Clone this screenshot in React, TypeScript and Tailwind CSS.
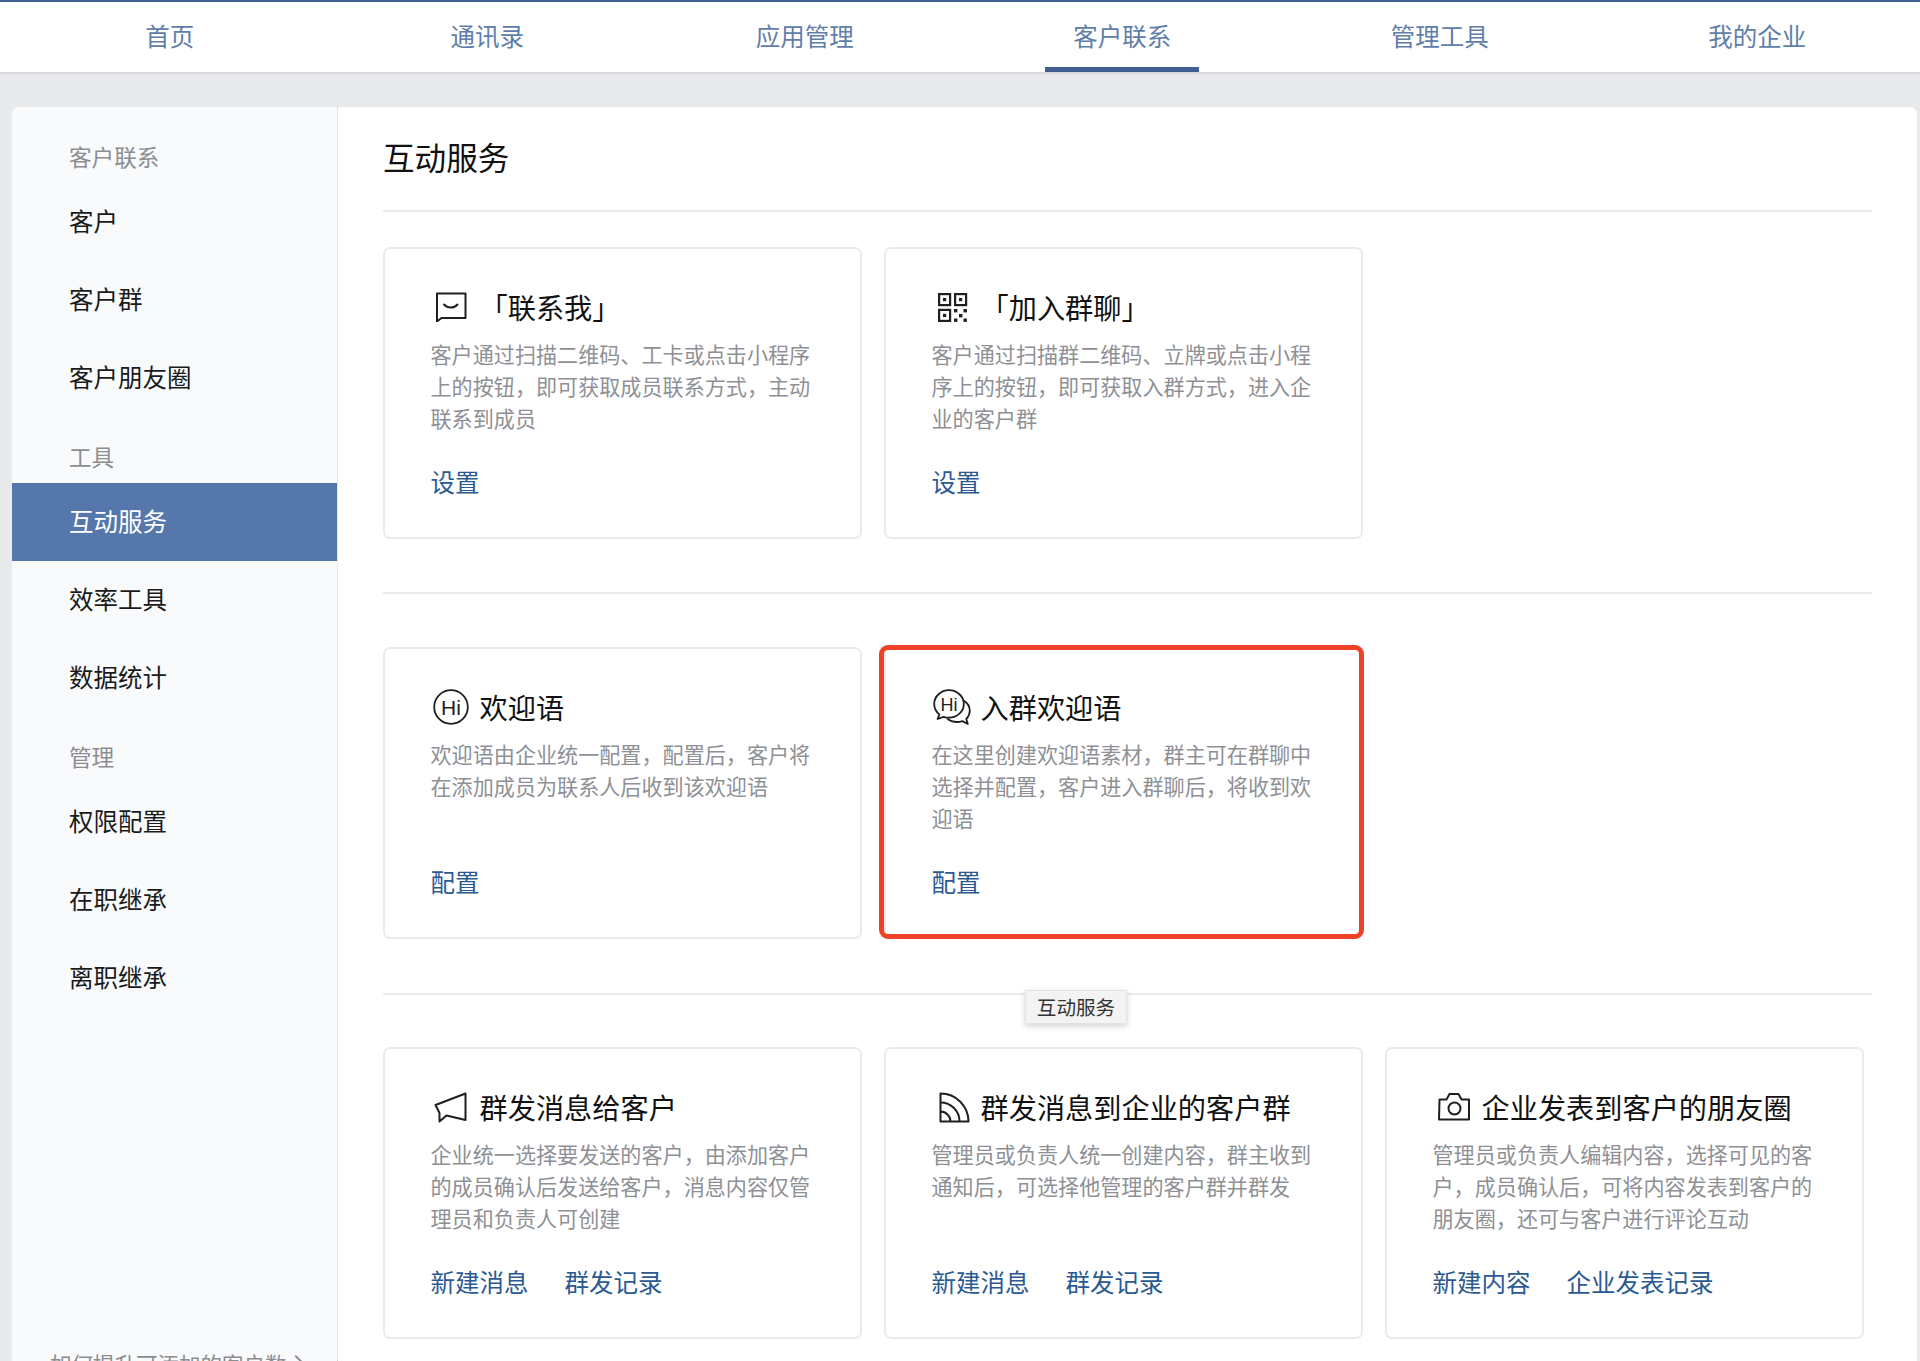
import React from "react";

const stroke = "#1f1f1f";

function ChatIcon() {
  return (
    <svg width="32" height="30" viewBox="0 0 32 30" fill="none" stroke={stroke} strokeWidth="2" className="ml-[4px]">
      <path d="M2 1.500h28.500v24.500H6.500L2 29.500z" strokeLinejoin="round" />
      <path d="M9 12.500c3.800 4 10 4 13.500 0" strokeLinecap="round" />
    </svg>
  );
}

function QrIcon() {
  return (
    <svg width="30" height="29" viewBox="0 0 30 29" className="ml-[6px]">
      <g fill="none" stroke={stroke} strokeWidth="2.2">
        <rect x="1.100" y="1.100" width="11" height="11" />
        <rect x="17.100" y="1.100" width="11" height="11" />
        <rect x="1.100" y="16.900" width="11" height="11" />
      </g>
      <g fill={stroke}>
        <rect x="5" y="5" width="3.200" height="3.200" />
        <rect x="21" y="5" width="3.200" height="3.200" />
        <rect x="5" y="20.800" width="3.200" height="3.200" />
        <rect x="16" y="16" width="3.400" height="3.400" />
        <rect x="25.500" y="16" width="3.400" height="3.400" />
        <rect x="21" y="21" width="3.400" height="3.400" />
        <rect x="16" y="25.500" width="3.400" height="3.400" />
        <rect x="25.500" y="25.500" width="3.400" height="3.400" />
      </g>
    </svg>
  );
}

function HiIcon() {
  return (
    <svg width="36" height="36" viewBox="0 0 36 36" className="ml-[2px]">
      <circle cx="18" cy="18" r="16.800" fill="none" stroke={stroke} strokeWidth="1.800" />
      <text x="18" y="25.500" textAnchor="middle" fontSize="21" fontFamily="'Liberation Sans', sans-serif" fill={stroke}>
        Hi
      </text>
    </svg>
  );
}

function HiGroupIcon() {
  return (
    <svg width="38" height="37" viewBox="0 0 38 37" className="ml-[1px]">
      <path
        d="M16 1.200C7.800 1.200 1.200 7.400 1.200 15c0 4.200 2 7.900 5.200 10.400L4.600 30l6-2.200c1.700.6 3.500.9 5.400.9 8.200 0 14.800-6.100 14.800-13.700S24.200 1.200 16 1.200z"
        fill="none"
        stroke={stroke}
        strokeWidth="1.800"
        strokeLinejoin="round"
      />
      <path
        d="M30.500 11.500c3.900 2.300 6.300 6.100 6.300 10.300 0 3.100-1.300 5.900-3.500 8.100l1.500 5-5.500-2.800c-1.700.6-3.500.9-5.300.9-3.800 0-7.200-1.300-9.700-3.500"
        fill="none"
        stroke={stroke}
        strokeWidth="1.800"
        strokeLinejoin="round"
      />
      <text x="16" y="21.500" textAnchor="middle" fontSize="18" fontFamily="'Liberation Sans', sans-serif" fill={stroke}>
        Hi
      </text>
    </svg>
  );
}

function MegaphoneIcon() {
  return (
    <svg width="33" height="31" viewBox="0 0 33 31" fill="none" stroke={stroke} strokeWidth="2" strokeLinejoin="round" className="ml-[3px]">
      <path d="M31.500 1.500v26.500L12.500 23.500 5.500 29.500l0-8.500L1.500 13z" />
    </svg>
  );
}

function RssIcon() {
  return (
    <svg width="31" height="31" viewBox="0 0 31 31" fill="none" stroke={stroke} strokeWidth="2" className="ml-[7px]">
      <path d="M1.500 1.500c15.500 0 28 12.500 28 28H1.500z" strokeLinejoin="round" />
      <path d="M1.500 10.500c10.500 0 19 8.500 19 19" />
      <path d="M1.500 19.500c5.500 0 10 4.500 10 10" />
    </svg>
  );
}

function CameraIcon() {
  return (
    <svg width="33" height="30" viewBox="0 0 33 30" fill="none" stroke={stroke} strokeWidth="2" strokeLinejoin="round" className="ml-[5px]">
      <path d="M1.500 7.500h7l3-5.500h9l3 5.500h7.500v20h-30z" />
      <circle cx="16.500" cy="16.500" r="6" />
    </svg>
  );
}

type CardData = {
  icon: React.ReactNode;
  title: string;
  desc: string;
  links: string[];
  highlight?: boolean;
};

function Card({ icon, title, desc, links, highlight }: CardData) {
  return (
    <div className="relative box-border h-[292px] w-[479px] shrink-0 rounded-[7px] border-2 border-[#e9ebef] bg-white pl-[45.500px] pt-[38px]">
      <div className="flex h-[40px] items-center">
        <div className="flex w-[49px] shrink-0 items-center">{icon}</div>
        <div className="text-[28.200px] leading-[40px] text-[#111111]">{title}</div>
      </div>
      <p className="mt-[11px] h-[96px] w-[384px] text-[21.100px] leading-[32px] text-[#8e9095]">{desc}</p>
      <div className="mt-[32px] flex gap-[36px] text-[24.500px] leading-[32px] text-[#2b5a93]">
        {links.map((l) => (
          <span key={l}>{l}</span>
        ))}
      </div>
      {highlight ? (
        <div className="absolute -left-[7px] -top-[4px] -right-[3px] -bottom-[2px] rounded-[9px] border-[5px] border-[#ef4126]" />
      ) : null}
    </div>
  );
}

const rows: CardData[][] = [
  [
    {
      icon: <ChatIcon />,
      title: "「联系我」",
      desc: "客户通过扫描二维码、工卡或点击小程序上的按钮，即可获取成员联系方式，主动联系到成员",
      links: ["设置"],
    },
    {
      icon: <QrIcon />,
      title: "「加入群聊」",
      desc: "客户通过扫描群二维码、立牌或点击小程序上的按钮，即可获取入群方式，进入企业的客户群",
      links: ["设置"],
    },
  ],
  [
    {
      icon: <HiIcon />,
      title: "欢迎语",
      desc: "欢迎语由企业统一配置，配置后，客户将在添加成员为联系人后收到该欢迎语",
      links: ["配置"],
    },
    {
      icon: <HiGroupIcon />,
      title: "入群欢迎语",
      desc: "在这里创建欢迎语素材，群主可在群聊中选择并配置，客户进入群聊后，将收到欢迎语",
      links: ["配置"],
      highlight: true,
    },
  ],
  [
    {
      icon: <MegaphoneIcon />,
      title: "群发消息给客户",
      desc: "企业统一选择要发送的客户，由添加客户的成员确认后发送给客户，消息内容仅管理员和负责人可创建",
      links: ["新建消息", "群发记录"],
    },
    {
      icon: <RssIcon />,
      title: "群发消息到企业的客户群",
      desc: "管理员或负责人统一创建内容，群主收到通知后，可选择他管理的客户群并群发",
      links: ["新建消息", "群发记录"],
    },
    {
      icon: <CameraIcon />,
      title: "企业发表到客户的朋友圈",
      desc: "管理员或负责人编辑内容，选择可见的客户，成员确认后，可将内容发表到客户的朋友圈，还可与客户进行评论互动",
      links: ["新建内容", "企业发表记录"],
    },
  ],
];

const tabs = ["首页", "通讯录", "应用管理", "客户联系", "管理工具", "我的企业"];

const side: { heading: string; items: string[] }[] = [
  { heading: "客户联系", items: ["客户", "客户群", "客户朋友圈"] },
  { heading: "工具", items: ["互动服务", "效率工具", "数据统计"] },
  { heading: "管理", items: ["权限配置", "在职继承", "离职继承"] },
];

export default function App() {
  return (
    <div
      lang="zh-CN"
      className="relative h-[1361px] w-[1920px] overflow-hidden bg-[#e8e9eb] font-['Noto_Sans_CJK_SC','Liberation_Sans',sans-serif]"
    >
      <header className="flex h-[72px] border-t-2 border-[#3f5e92] bg-white pl-[11px] pr-[4px] shadow-[0_1px_3px_rgba(0,0,0,0.12)]">
        {tabs.map((t) => (
          <div key={t} className="relative flex h-[70px] flex-1 items-center justify-center pb-[1px] text-[24.500px] text-[#5f7ea9]">
            {t}
            {t === "客户联系" ? (
              <div className="absolute bottom-0 left-1/2 h-[5px] w-[154px] -translate-x-1/2 bg-[#3f5e92]" />
            ) : null}
          </div>
        ))}
      </header>

      <div className="ml-[12px] mr-[3px] mt-[35px] flex h-[1300px] overflow-hidden rounded-t-[7px] bg-white">
        <aside className="w-[326px] shrink-0 border-r border-dotted border-[#cfd2d8] bg-[#f9fafc] pt-[26px]">
          {side.map((s, i) => (
            <div key={s.heading}>
              <div
                className={
                  i === 0
                    ? "flex h-[50px] items-center pb-[3px] pl-[57px] text-[22.600px] text-[#8b8d91]"
                    : "mt-[16px] flex h-[50px] items-center pb-[3px] pl-[57px] text-[22.600px] text-[#8b8d91]"
                }
              >
                {s.heading}
              </div>
              {s.items.map((it) => (
                <div
                  key={it}
                  className={
                    it === "互动服务"
                      ? "flex h-[78px] items-center bg-[#5577ab] pb-[1px] pl-[57px] text-[24.500px] text-white"
                      : "flex h-[78px] items-center pb-[1px] pl-[57px] text-[24.500px] text-[#1a1a1a]"
                  }
                >
                  {it}
                </div>
              ))}
            </div>
          ))}
          <div className="mt-[332px] flex items-center gap-[4px] pl-[38px] text-[21.500px] leading-[30px] text-[#8b8d91]">
            <span>如何提升可添加的客户数</span>
            <span className="-mt-[4px] inline-block h-[10px] w-[10px] rotate-45 border-r-2 border-t-2 border-[#8b8d91]" />
          </div>
        </aside>

        <main className="flex-1 pl-[45px] pr-[45px]">
          <div className="flex h-[105px] items-center border-b-2 border-[#e6e8ec] pb-[4px] text-[31.600px] text-[#111111]">
            互动服务
          </div>
          {rows.map((row, i) => (
            <div
              key={i}
              className={
                i === 0
                  ? "flex gap-[22px] border-b-2 border-[#e9ebee] pb-[53px] pt-[35px]"
                  : i === 1
                    ? "flex gap-[22px] border-b-2 border-[#e9ebee] pb-[54px] pt-[53px]"
                    : "flex gap-[22px] pt-[52px]"
              }
            >
              {row.map((c) => (
                <Card key={c.title} {...c} />
              ))}
            </div>
          ))}
        </main>
      </div>

      <div className="absolute left-[1025px] top-[990px] flex h-[34px] w-[102px] items-center justify-center border border-[#e2e2e2] bg-[#f3f3f3] text-[19.600px] text-[#333333] shadow-[0_2px_6px_rgba(0,0,0,0.18)]">
        互动服务
      </div>
    </div>
  );
}
